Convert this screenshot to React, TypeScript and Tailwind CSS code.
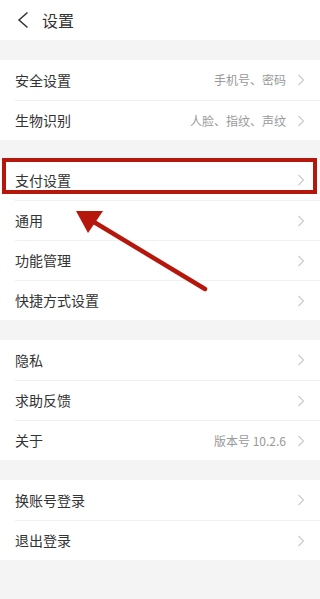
const font = { fontFamily: '"Noto Sans CJK SC", "Noto Sans", sans-serif' }

type Item = { label: string; value?: string }

const groups: Item[][] = [
  [
    { label: "安全设置", value: "手机号、密码" },
    { label: "生物识别", value: "人脸、指纹、声纹" },
  ],
  [{ label: "支付设置" }, { label: "通用" }, { label: "功能管理" }, { label: "快捷方式设置" }],
  [{ label: "隐私" }, { label: "求助反馈" }, { label: "关于", value: "版本号 10.2.6" }],
  [{ label: "换账号登录" }, { label: "退出登录" }],
]

const Chevron = () => (
  <svg width="8" height="12" viewBox="0 0 8 12" className="ml-[11px] shrink-0">
    <path d="M1.5 1 L6.5 6 L1.5 11" fill="none" stroke="#c8c8c8" strokeWidth="1.1" />
  </svg>
)

const App = () => {
  return (
    <div className="relative min-h-[599px] w-[320px] bg-[#f4f4f4]" style={font}>
      <header className="flex h-10 items-center bg-white">
        <svg width="12" height="18" viewBox="0 0 12 18" className="ml-[17px]">
          <path d="M10.5 1.5 L2 9 L10.5 16.5" fill="none" stroke="#333" strokeWidth="1.5" />
        </svg>
        <h1 className="ml-[13px] text-[16px] text-[#333]">设置</h1>
      </header>

      <div className="flex flex-col gap-5 pt-5">
        {groups.map((group, gi) => (
          <div key={gi} className="bg-white">
            {group.map((item, i) => (
              <div key={item.label} className="pl-[15px]">
                <div
                  className={`flex h-10 items-center pr-[15px] ${i > 0 ? "border-t border-[#f0f0f0]" : ""}`}
                >
                  <span className="text-[14px] text-[#333]">{item.label}</span>
                  <span className="ml-auto text-[12px] text-[#999]">{item.value}</span>
                  <Chevron />
                </div>
              </div>
            ))}
          </div>
        ))}
      </div>

      {/* annotation */}
      <div className="absolute left-[2px] top-[158px] h-[36px] w-[315px] border-[4px] border-[#b5170d]" />
      <svg className="absolute left-0 top-0" width="320" height="599" viewBox="0 0 320 599">
        <line x1="205" y1="289" x2="84" y2="216" stroke="#b5170d" strokeWidth="4.5" strokeLinecap="round" />
        <polygon points="76,211 103,211 88,233" fill="#b5170d" />
      </svg>
    </div>
  )
}

export default App
